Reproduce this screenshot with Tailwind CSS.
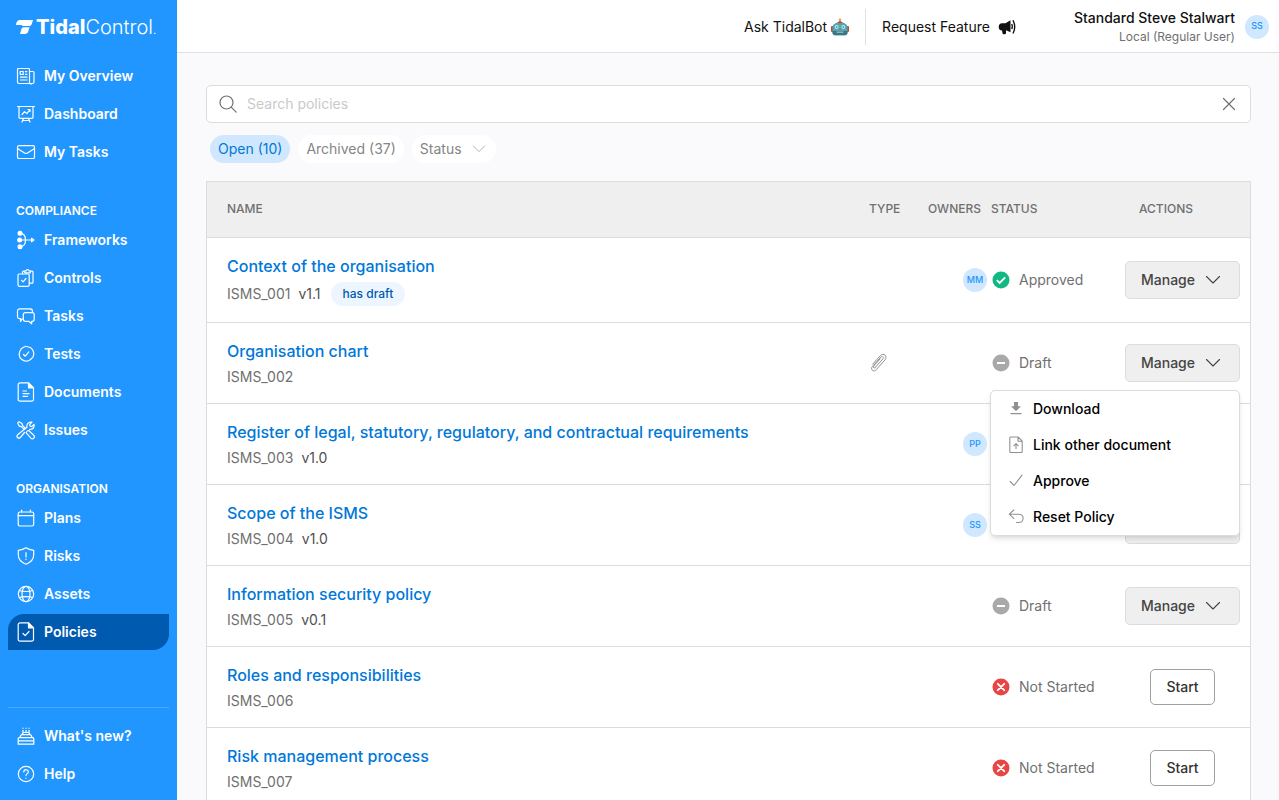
<!DOCTYPE html>
<html lang="en">
<head>
    <meta charset="UTF-8">
    <meta name="viewport" content="width=device-width, initial-scale=1.0">
    <title>Policies - TidalControl</title>
    <script src="https://cdn.jsdelivr.net/npm/@tailwindcss/browser@4"></script>
</head>
<body class="flex h-screen overflow-hidden bg-[#fafafc] font-['Inter',sans-serif] text-sm text-[#707070]">
    <!-- shared icons -->
    <svg class="hidden">
        <symbol id="chevron" viewBox="0 0 16 16"><path d="M1.5 4.5 8 11l6.5-6.5" fill="none" stroke="currentColor" stroke-width="1.1" stroke-linecap="round" stroke-linejoin="round"/></symbol>
        <symbol id="approved" viewBox="0 0 18 18"><circle cx="9" cy="9" r="8.5" fill="#10b981"/><path d="m4.8 9.2 2.8 2.8 5.6-5.6" fill="none" stroke="#fff" stroke-width="1.9"/></symbol>
        <symbol id="draft" viewBox="0 0 18 18"><circle cx="9" cy="9" r="8.5" fill="#a9a9a9"/><path d="M5 9h8" stroke="#fff" stroke-width="2"/></symbol>
        <symbol id="not-started" viewBox="0 0 18 18"><circle cx="9" cy="9" r="8.5" fill="#e84545"/><path d="m5.8 5.8 6.4 6.4m0-6.4-6.4 6.4" stroke="#fff" stroke-width="1.9" stroke-linecap="round"/></symbol>
    </svg>

    <aside class="flex w-[177px] shrink-0 flex-col bg-[#2196ff] px-2 pb-2 font-semibold text-white">
        <a href="#" class="flex h-[58px] shrink-0 items-center gap-[3px] pl-2 pb-1 text-xl">
            <svg class="h-4 w-[17px] shrink-0" viewBox="0 0 17 16" fill="currentColor"><path d="M3.2 1H17l-1.3 4.2C15.2 6.6 14.3 7 13 7H7.5C6.500 7 6 6.7 5.6 6H0C.3 3.5 1 1.5 3.2 1Z"/><path d="M7.6 8.3h5.9l-1.2 4c-.5 1.7-1.7 2.7-3.5 2.7H4l1.2-4.2c.4-1.500 1-2.300 2.400-2.500Z"/></svg>
            <span class="whitespace-nowrap font-light"><span class="font-extrabold">Tidal</span>Control<span class="text-xs">.</span></span>
        </a>
        <nav>
            <ul class="space-y-0.5">
                <li><a href="#" class="flex h-9 items-center gap-2 pl-2">
                    <svg class="size-5" viewBox="0 0 20 20" fill="none" stroke="currentColor" stroke-width="1.2" stroke-linejoin="round"><path d="M13.5 16V3.5a1 1 0 0 0-1-1h-10a1 1 0 0 0-1 1V16a1.5 1.5 0 0 0 1.5 1.5h13.5A1.5 1.5 0 0 0 18 16V6.5a1 1 0 0 0-1-1h-3.5M16 17.5A1.5 1.5 0 0 1 13.5 16M4.2 5.5h3v3h-3zM9 5.6h2.3M9 8.4h2.3M4 11.2h7.5M4 14h7.5"/></svg>My Overview</a></li>
                <li><a href="#" class="flex h-9 items-center gap-2 pl-2">
                    <svg class="size-5" viewBox="0 0 20 20" fill="none" stroke="currentColor" stroke-width="1.2" stroke-linecap="round" stroke-linejoin="round"><path d="M1.5 2.5h17M3 2.5v10.8a1 1 0 0 0 1 1h12a1 1 0 0 0 1-1V2.5M7.5 14.5 6 18M12.5 14.5 14 18M6.5 16.5h7M6 10.5l2.5-2.8 2.5 1.8 3-3.8M12 5.5h2v2"/></svg>Dashboard</a></li>
                <li><a href="#" class="flex h-9 items-center gap-2 pl-2">
                    <svg class="size-5" viewBox="0 0 20 20" fill="none" stroke="currentColor" stroke-width="1.2" stroke-linejoin="round"><rect x="1.5" y="3.7" width="17" height="12.8" rx="1.6"/><path d="m1.500 6.500 7 4.500c1 .6 2 .6 3 0l7-4.500"/></svg>My Tasks</a></li>
            </ul>
            <h2 class="mt-[31px] mb-px flex h-5 items-center pl-2 text-xs">COMPLIANCE</h2>
            <ul class="space-y-0.5">
                <li><a href="#" class="flex h-9 items-center gap-2 pl-2">
                    <svg class="size-5" viewBox="0 0 20 20" fill="none" stroke="currentColor" stroke-width="1.2" stroke-linecap="round" stroke-linejoin="round"><g fill="currentColor"><circle cx="4" cy="3.3" r="1.9"/><circle cx="3.6" cy="10" r="1.9"/><circle cx="4" cy="16.7" r="1.9"/><path d="m15.500 8.300 2.500 1.700-2.500 1.700z"/></g><path d="M4 10h12M4 3.300c4 0 5.500 2.700 5.500 6.700S8 16.700 4 16.700"/></svg>Frameworks</a></li>
                <li><a href="#" class="flex h-9 items-center gap-2 pl-2">
                    <svg class="size-5" viewBox="0 0 20 20" fill="none" stroke="currentColor" stroke-width="1.2" stroke-linecap="round" stroke-linejoin="round"><path d="M6.5 5.7V4.2a1 1 0 0 1 1-1h1.300M14.300 3.200H16a1 1 0 0 1 1 1v10a1 1 0 0 1-1 1h-2.500M8.800 2.800h1.300c.4-1.700 2.500-1.700 2.900 0h1.300v2H8.800z"/><rect x="2" y="6" width="11.2" height="12.3" rx="1.2"/><path d="m5.500 12.300 1.600 1.600 2.800-3.400"/></svg>Controls</a></li>
                <li><a href="#" class="flex h-9 items-center gap-2 pl-2">
                    <svg class="size-5" viewBox="0 0 20 20" fill="none" stroke="currentColor" stroke-width="1.2" stroke-linecap="round" stroke-linejoin="round"><path d="M6.300 12.800 4.500 15.500v-2.800h-.8a2.200 2.200 0 0 1-2.200-2.200V5a2.200 2.200 0 0 1 2.200-2.200h10.500A2.200 2.200 0 0 1 16.400 5v1.200"/><path d="M9.300 6.700h6.900a2 2 0 0 1 2 2v4.600a2 2 0 0 1-2 2h-.5v2.500l-3-2.500H9.300a2 2 0 0 1-2-2V8.700a2 2 0 0 1 2-2z"/></svg>Tasks</a></li>
                <li><a href="#" class="flex h-9 items-center gap-2 pl-2">
                    <svg class="size-5" viewBox="0 0 20 20" fill="none" stroke="currentColor" stroke-width="1.2" stroke-linecap="round" stroke-linejoin="round"><path d="M10 2.300 12.400 3l2.400.8 1.700 1.900 1.100 2.200.1 2.500-.6 2.400-1.700 1.900-2 1.600-2.400.9-2.400-.3-2.300-1-1.900-1.700-1-2.300-.2-2.500.8-2.300L5.300 4.700l2.200-1.500z"/><path d="m7.500 10.500 1.800 1.700L12.700 8"/></svg>Tests</a></li>
                <li><a href="#" class="flex h-9 items-center gap-2 pl-2">
                    <svg class="size-5" viewBox="0 0 20 20" fill="none" stroke="currentColor" stroke-width="1.2" stroke-linecap="round" stroke-linejoin="round"><path d="M12.500 .8H4A1.800 1.800 0 0 0 2.200 2.600v14.800A1.800 1.800 0 0 0 4 19.200h11.700a1.800 1.800 0 0 0 1.800-1.800V5.800zM7 9h3.500M7 11.700h6M7 14.300h4.500"/><path fill="currentColor" d="M12.500 .8v5h5z"/></svg>Documents</a></li>
                <li><a href="#" class="flex h-9 items-center gap-2 pl-2">
                    <svg class="size-5" viewBox="0 0 20 20" fill="none" stroke="currentColor" stroke-width="1.2" stroke-linecap="round" stroke-linejoin="round"><path d="m2 2.700 1-1 3 1.800.5 2 3 3M8.300 9.700l-3-3-2-.5L1.800 3.200M11.500 10.800l1.200-.3 5 4.700a2 2 0 0 1-2.800 2.900l-4.700-5.200.4-1.200M8.500 12.500l-4.200 5a1.900 1.900 0 0 1-2.700-2.700L11 7.200c-.7-2.800 1.200-5.700 5-5L13.700 4.500l.4 1.700 1.700.4L18 4.300c.7 3.300-1.500 5.500-4.500 5"/></svg>Issues</a></li>
            </ul>
            <h2 class="mt-[31px] mb-px flex h-5 items-center pl-2 text-xs">ORGANISATION</h2>
            <ul class="space-y-0.5">
                <li><a href="#" class="flex h-9 items-center gap-2 pl-2">
                    <svg class="size-5" viewBox="0 0 20 20" fill="none" stroke="currentColor" stroke-width="1.2" stroke-linecap="round" stroke-linejoin="round"><rect x="2.2" y="4" width="15.5" height="14" rx="1.8"/><path d="M2.200 7.700h15.500M5.600 2v2M14.400 2v2"/></svg>Plans</a></li>
                <li><a href="#" class="flex h-9 items-center gap-2 pl-2">
                    <svg class="size-5" viewBox="0 0 20 20" fill="none" stroke="currentColor" stroke-width="1.2" stroke-linecap="round" stroke-linejoin="round"><path d="M10 1.800c2.200 1.500 4.600 2.200 7.700 2.500v4.500c0 5-3.200 7.700-7.700 9.500-4.500-1.800-7.700-4.500-7.700-9.500V4.300c3.100-.3 5.500-1 7.700-2.500zM10 6.700v4.300M10 13.200v.2"/></svg>Risks</a></li>
                <li><a href="#" class="flex h-9 items-center gap-2 pl-2">
                    <svg class="size-5" viewBox="0 0 20 20" fill="none" stroke="currentColor" stroke-width="1.2"><circle cx="10" cy="10" r="7.7"/><ellipse cx="10" cy="10" rx="4" ry="7.7"/><path d="M3.300 6.500c3 1.300 10.400 1.300 13.400 0M3.300 13.500c3-1.300 10.400-1.300 13.400 0"/></svg>Assets</a></li>
                <li><a href="#" class="flex h-9 items-center gap-2 rounded-tl-2xl rounded-br-2xl bg-[#005aaf] pl-2">
                    <svg class="size-5" viewBox="0 0 20 20" fill="none" stroke="currentColor" stroke-width="1.2" stroke-linecap="round" stroke-linejoin="round"><path d="M12.500 .8H4A1.800 1.800 0 0 0 2.200 2.600v14.800A1.800 1.800 0 0 0 4 19.200h11.700a1.800 1.800 0 0 0 1.800-1.800V5.800zM7 11.500l2.200 2.200 3.800-4.200"/><path fill="currentColor" d="M12.500 .8v5h5z"/></svg>Policies</a></li>
            </ul>
        </nav>
        <ul class="mt-auto space-y-0.5 border-t border-[#4dabff] pt-2.5">
            <li><a href="#" class="flex h-9 items-center gap-2 pl-2">
                <svg class="size-5" viewBox="0 0 20 20" fill="none" stroke="currentColor" stroke-width="1.2" stroke-linejoin="round"><path d="M2.200 18.200h15.600v-5.500a1 1 0 0 0-1-1H3.200a1 1 0 0 0-1 1zM2.200 14.800h15.600M4.200 11.700c0-2 .6-3 2-3h7.600c1.400 0 2 1 2 3M6.300 8.700c0-1.400.6-2.200 1.700-2.200h4c1.100 0 1.700.8 1.700 2.200M7 4v2.500M10 4v2.500M13 4v2.500M7 1.800v1M10 1.800v1M13 1.800v1"/></svg>What's new?</a></li>
            <li><a href="#" class="flex h-9 items-center gap-2 pl-2">
                <svg class="size-5" viewBox="0 0 20 20" fill="none" stroke="currentColor" stroke-width="1.2" stroke-linecap="round"><circle cx="10" cy="10" r="7.7"/><path d="M7.800 7.900c.1-3 4.600-2.800 4.500 0 0 1.800-2.300 1.700-2.300 3.700M10 14v.2"/></svg>Help</a></li>
        </ul>
    </aside>

    <div class="flex min-w-0 flex-1 flex-col">
        <header class="flex h-[53px] shrink-0 items-center justify-end border-b border-[#e0e0e0] bg-white pt-px pr-2.5 text-[#111]">
            <a href="#" class="flex items-center gap-1 pr-4">Ask TidalBot
                <svg class="size-[18px]" viewBox="0 0 18 18"><path d="M9 3v2.500" stroke="#a33" stroke-width="1.5"/><circle cx="9" cy="1.8" r="1.3" fill="#f0a030"/><rect y="8" width="3" height="6" rx="1" fill="#b5493c"/><rect x="15" y="8" width="3" height="6" rx="1" fill="#b5493c"/><path d="M1.500 9.500C1.500 6.500 4 4.500 9 4.500s7.500 2 7.500 5v5c0 2-1.500 2.800-3.500 2.800H5c-2 0-3.500-.8-3.500-2.800z" fill="#55a5b2"/><path d="M1.500 13h15v1.700c0 1.800-1.500 2.600-3.500 2.600H5c-2 0-3.500-.8-3.500-2.600z" fill="#3a7686"/><path d="M6.500 4.800c1.500-.7 3.500-.7 5 0" stroke="#c44" stroke-width="1.2" fill="none"/><circle cx="5.7" cy="9" r="2" fill="#a8edf2"/><circle cx="12.3" cy="9" r="2" fill="#a8edf2"/><circle cx="5.7" cy="9" r=".8" fill="#347987"/><circle cx="12.3" cy="9" r=".8" fill="#347987"/><path d="m9 9.800-1 2h2z" fill="#d75b4d"/><path d="M5.500 14.200h7" stroke="#8fc9d0" stroke-width="1.2"/></svg></a>
            <a href="#" class="flex h-9 items-center gap-2 border-l border-[#e0e0e0] pl-4">Request Feature
                <svg class="size-[18px]" viewBox="0 0 18 18" fill="currentColor"><path d="M12.500 2.200v12L8 12.300V15c0 .8-.4 1.200-1.200 1.200H5.700c-.7 0-1.100-.4-1.200-1L4 12.500c-2.200 0-3.300-1.400-3.300-3.500S2 5.200 4 5.200h3.500z"/><path d="M15 2.300c2 4 2 9.500 0 13.200M13.700 6c.7 1.500.7 3.500 0 5" fill="none" stroke="currentColor" stroke-width="1.4"/></svg></a>
            <div class="ml-[58px] text-right">
                <div class="font-medium leading-5">Standard Steve Stalwart</div>
                <div class="text-xs leading-[18px] text-[#707070]">Local (Regular User)</div>
            </div>
            <span class="ml-2.5 flex size-6 items-center justify-center rounded-full bg-[#cfe7ff] text-[9px] font-medium text-[#2196ff]">SS</span>
        </header>

        <main class="min-h-0 flex-1 overflow-hidden pt-8 pr-7 pl-[29px]">
            <form class="flex h-[38px] items-center rounded-[5px] border border-[#dcdcdc] bg-white px-3">
                <label for="search" class="shrink-0"><svg class="size-[18px]" viewBox="0 0 18 18" fill="none" stroke="currentColor" stroke-width="1.2" stroke-linecap="round"><circle cx="7.5" cy="7.5" r="6.5"/><path d="m12.200 12.200 5 5"/></svg></label>
                <input id="search" type="text" placeholder="Search policies" class="ml-2.5 min-w-0 flex-1 outline-none placeholder:text-[#cacaca]">
                <button type="reset" aria-label="Clear" class="mr-px"><svg class="size-4" viewBox="0 0 16 16" stroke="currentColor" stroke-width="1.2" stroke-linecap="round"><path d="m2.500 2.500 11 11m0-11-11 11"/></svg></button>
            </form>
            <div class="mt-3 flex gap-2 pl-1">
                <button class="h-7 rounded-full bg-[#cfe7ff] px-2 text-[#0078d9]">Open (10)</button>
                <button class="h-7 rounded-full bg-white px-2 text-[#858585]">Archived (37)</button>
                <div class="relative rounded-full bg-white text-[#858585]">
                    <select aria-label="Status" class="h-7 w-[84px] appearance-none rounded-full pl-2 outline-none"><option>Status</option></select>
                    <svg class="pointer-events-none absolute top-[7px] right-2.5 size-3.5 text-[#b0b0b0]"><use href="#chevron"/></svg>
                </div>
            </div>

            <div class="mt-[18px] border border-[#dcdcdc] bg-white">
                <table class="w-full table-fixed border-separate border-spacing-0">
                    <colgroup>
                        <col><col class="w-[59px]"><col class="w-[73px]"><col class="w-[124px]"><col class="w-[135px]">
                    </colgroup>
                    <thead>
                        <tr class="h-14 bg-[#efefef] text-left text-xs *:border-b *:border-[#dcdcdc] *:pb-0.5 *:font-medium">
                            <th class="pl-5">NAME</th>
                            <th class="pl-2.5">TYPE</th>
                            <th class="pl-2.5">OWNERS</th>
                            <th>STATUS</th>
                            <th class="pl-6">ACTIONS</th>
                        </tr>
                    </thead>
                    <tbody>
                        <tr class="*:border-b *:border-[#dcdcdc]">
                            <td class="pt-4 pb-3.5 pl-5">
                                <a href="#" class="block text-base font-medium text-[#0078d9]">Context of the organisation</a>
                                <div class="mt-0.5 flex items-center leading-6">ISMS_001 <span class="ml-2 text-[#505050]">v1.1</span> <span class="my-0.5 ml-2.5 rounded-full bg-[#edf5ff] px-3 text-xs leading-6 font-medium text-[#005aaf]">has draft</span></div>
                            </td>
                            <td></td>
                            <td class="pr-1"><span class="ml-auto flex size-6 items-center justify-center rounded-full bg-[#cfe7ff] text-[9px] font-medium text-[#2196ff]">MM</span></td>
                            <td class="pl-px"><div class="flex items-center gap-[9px]"><svg class="size-[18px]"><use href="#approved"/></svg>Approved</div></td>
                            <td class="px-2.5"><button class="flex h-[38px] w-full items-center gap-2.5 rounded-[5px] border border-[#dcdcdc] bg-[#efefef] pl-[15px] font-medium text-[#444]">Manage <svg class="size-4"><use href="#chevron"/></svg></button></td>
                        </tr>
                        <tr class="*:border-b *:border-[#dcdcdc]">
                            <td class="pt-4 pb-3.5 pl-5">
                                <a href="#" class="block text-base font-medium text-[#0078d9]">Organisation chart</a>
                                <div class="mt-0.5 leading-6">ISMS_002</div>
                            </td>
                            <td class="pl-2.5"><svg class="size-5 text-[#909090]" viewBox="0 0 20 20" fill="none" stroke="currentColor" stroke-width="1" stroke-linecap="round"><path d="M6.200 14.500 13.800 6c1.500-1.600-.6-3.500-2-1.900l-8.500 9.500c-2.300 2.700 1.300 6 3.700 3.300l9-10c3.100-3.700-1.500-7.700-4.700-4.200L3.600 11.200M6.200 14.500c-1.200 1.200-2.500-.2-1.500-1.400l6.500-7.300"/></svg></td>
                            <td></td>
                            <td class="pl-px"><div class="flex items-center gap-[9px]"><svg class="size-[18px]"><use href="#draft"/></svg>Draft</div></td>
                            <td class="px-2.5">
                                <div class="relative">
                                    <button class="flex h-[38px] w-full items-center gap-2.5 rounded-[5px] border border-[#dcdcdc] bg-[#efefef] pl-[15px] font-medium text-[#444]">Manage <svg class="size-4"><use href="#chevron"/></svg></button>
                                    <div class="absolute top-full right-0 z-10 mt-2 w-[250px] rounded-[5px] border border-[#dcdcdc] bg-white font-medium text-black shadow-md">
                                        <button class="flex h-9 w-full items-center gap-2 pl-4"><svg class="size-[18px] text-[#909090]" viewBox="0 0 18 18" fill="currentColor"><path d="M7 2h4v4.200h3L9 11.200 4 6.200h3zM3.500 13h11v1.300h-11z"/></svg>Download</button>
                                        <button class="flex h-9 w-full items-center gap-2 pl-4"><svg class="size-[18px] text-[#909090]" viewBox="0 0 18 18" fill="none" stroke="currentColor" stroke-width="1.1" stroke-linejoin="round"><path d="M11 1H3.800a1 1 0 0 0-1 1v13.500a1 1 0 0 0 1 1h10.400a1 1 0 0 0 1-1V5.200zM11 1v4.200h4.200M9 13V8M6.500 10.200 9 7.500l2.500 2.700"/></svg>Link other document</button>
                                        <button class="flex h-9 w-full items-center gap-2 pl-4"><svg class="size-[18px] text-[#909090]" viewBox="0 0 18 18" fill="none" stroke="currentColor" stroke-width="1.1" stroke-linecap="round"><path d="M3.200 9.500 7 13.500l8-10.300"/></svg>Approve</button>
                                        <button class="flex h-9 w-full items-center gap-2 pl-4"><svg class="size-[18px] text-[#909090]" viewBox="0 0 18 18" fill="none" stroke="currentColor" stroke-width="1.1" stroke-linecap="round" stroke-linejoin="round"><path d="M6.800 2 2.300 6.200l4.500 4.200M2.300 6.200H12a4.100 4.100 0 0 1 0 8.300h-2.500"/></svg>Reset Policy</button>
                                    </div>
                                </div>
                            </td>
                        </tr>
                        <tr class="*:border-b *:border-[#dcdcdc]">
                            <td class="pt-4 pb-3.5 pl-5">
                                <a href="#" class="block text-base font-medium text-[#0078d9]">Register of legal, statutory, regulatory, and contractual requirements</a>
                                <div class="mt-0.5 leading-6">ISMS_003 <span class="ml-1 text-[#505050]">v1.0</span></div>
                            </td>
                            <td></td>
                            <td class="pr-1"><span class="ml-auto flex size-6 items-center justify-center rounded-full bg-[#cfe7ff] text-[9px] font-medium text-[#2196ff]">PP</span></td>
                            <td></td>
                            <td></td>
                        </tr>
                        <tr class="*:border-b *:border-[#dcdcdc]">
                            <td class="pt-4 pb-3.5 pl-5">
                                <a href="#" class="block text-base font-medium text-[#0078d9]">Scope of the ISMS</a>
                                <div class="mt-0.5 leading-6">ISMS_004 <span class="ml-1 text-[#505050]">v1.0</span></div>
                            </td>
                            <td></td>
                            <td class="pr-1"><span class="ml-auto flex size-6 items-center justify-center rounded-full bg-[#cfe7ff] text-[9px] font-medium text-[#2196ff]">SS</span></td>
                            <td></td>
                            <td class="px-2.5"><button aria-label="Manage" class="block h-[38px] w-full rounded-[5px] border border-[#dcdcdc] bg-[#efefef]"></button></td>
                        </tr>
                        <tr class="*:border-b *:border-[#dcdcdc]">
                            <td class="pt-4 pb-3.5 pl-5">
                                <a href="#" class="block text-base font-medium text-[#0078d9]">Information security policy</a>
                                <div class="mt-0.5 leading-6">ISMS_005 <span class="ml-1 text-[#505050]">v0.1</span></div>
                            </td>
                            <td></td>
                            <td></td>
                            <td class="pl-px"><div class="flex items-center gap-[9px]"><svg class="size-[18px]"><use href="#draft"/></svg>Draft</div></td>
                            <td class="px-2.5"><button class="flex h-[38px] w-full items-center gap-2.5 rounded-[5px] border border-[#dcdcdc] bg-[#efefef] pl-[15px] font-medium text-[#444]">Manage <svg class="size-4"><use href="#chevron"/></svg></button></td>
                        </tr>
                        <tr class="*:border-b *:border-[#dcdcdc]">
                            <td class="pt-4 pb-3.5 pl-5">
                                <a href="#" class="block text-base font-medium text-[#0078d9]">Roles and responsibilities</a>
                                <div class="mt-0.5 leading-6">ISMS_006</div>
                            </td>
                            <td></td>
                            <td></td>
                            <td class="pl-px"><div class="flex items-center gap-[9px]"><svg class="size-[18px]"><use href="#not-started"/></svg>Not Started</div></td>
                            <td class="text-center"><button class="h-9 rounded-[5px] border border-[#a0a0a0] bg-white px-[15px] font-medium text-[#333]">Start</button></td>
                        </tr>
                        <tr class="*:border-b *:border-[#dcdcdc]">
                            <td class="pt-4 pb-3.5 pl-5">
                                <a href="#" class="block text-base font-medium text-[#0078d9]">Risk management process</a>
                                <div class="mt-0.5 leading-6">ISMS_007</div>
                            </td>
                            <td></td>
                            <td></td>
                            <td class="pl-px"><div class="flex items-center gap-[9px]"><svg class="size-[18px]"><use href="#not-started"/></svg>Not Started</div></td>
                            <td class="text-center"><button class="h-9 rounded-[5px] border border-[#a0a0a0] bg-white px-[15px] font-medium text-[#333]">Start</button></td>
                        </tr>
                    </tbody>
                </table>
            </div>
        </main>
    </div>
</body>
</html>
